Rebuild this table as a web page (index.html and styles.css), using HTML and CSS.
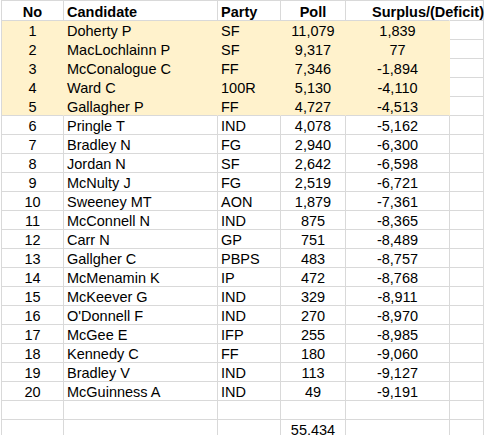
FILE: index.html
```html
<!DOCTYPE html>
<html>
<head>
<meta charset="utf-8">
<link rel="stylesheet" href="styles.css">
</head>
<body>
<div class="sheet">
  <div class="c h ctr">No</div><div class="c h lft">Candidate</div><div class="c h lft">Party</div><div class="c h ctr">Poll</div><div class="c h sur">Surplus/(Deficit)</div><div class="c h"></div>

  <div class="c hl ctr">1</div><div class="c hl lft">Doherty P</div><div class="c hl lft">SF</div><div class="c hl ctr">11,079</div><div class="c hl ctr">1,839</div><div class="c"></div>
  <div class="c hl ctr">2</div><div class="c hl lft">MacLochlainn P</div><div class="c hl lft">SF</div><div class="c hl ctr">9,317</div><div class="c hl ctr">77</div><div class="c"></div>
  <div class="c hl ctr">3</div><div class="c hl lft">McConalogue C</div><div class="c hl lft">FF</div><div class="c hl ctr">7,346</div><div class="c hl ctr">-1,894</div><div class="c"></div>
  <div class="c hl ctr">4</div><div class="c hl lft">Ward C</div><div class="c hl lft">100R</div><div class="c hl ctr">5,130</div><div class="c hl ctr">-4,110</div><div class="c"></div>
  <div class="c hl last ctr">5</div><div class="c hl last lft">Gallagher P</div><div class="c hl last lft">FF</div><div class="c hl last ctr">4,727</div><div class="c hl last ctr">-4,513</div><div class="c"></div>

  <div class="c ctr">6</div><div class="c lft">Pringle T</div><div class="c lft">IND</div><div class="c ctr">4,078</div><div class="c ctr">-5,162</div><div class="c"></div>
  <div class="c ctr">7</div><div class="c lft">Bradley N</div><div class="c lft">FG</div><div class="c ctr">2,940</div><div class="c ctr">-6,300</div><div class="c"></div>
  <div class="c ctr">8</div><div class="c lft">Jordan N</div><div class="c lft">SF</div><div class="c ctr">2,642</div><div class="c ctr">-6,598</div><div class="c"></div>
  <div class="c ctr">9</div><div class="c lft">McNulty J</div><div class="c lft">FG</div><div class="c ctr">2,519</div><div class="c ctr">-6,721</div><div class="c"></div>
  <div class="c ctr">10</div><div class="c lft">Sweeney MT</div><div class="c lft">AON</div><div class="c ctr">1,879</div><div class="c ctr">-7,361</div><div class="c"></div>
  <div class="c ctr">11</div><div class="c lft">McConnell N</div><div class="c lft">IND</div><div class="c ctr">875</div><div class="c ctr">-8,365</div><div class="c"></div>
  <div class="c ctr">12</div><div class="c lft">Carr N</div><div class="c lft">GP</div><div class="c ctr">751</div><div class="c ctr">-8,489</div><div class="c"></div>
  <div class="c ctr">13</div><div class="c lft">Gallgher C</div><div class="c lft">PBPS</div><div class="c ctr">483</div><div class="c ctr">-8,757</div><div class="c"></div>
  <div class="c ctr">14</div><div class="c lft">McMenamin K</div><div class="c lft">IP</div><div class="c ctr">472</div><div class="c ctr">-8,768</div><div class="c"></div>
  <div class="c ctr">15</div><div class="c lft">McKeever G</div><div class="c lft">IND</div><div class="c ctr">329</div><div class="c ctr">-8,911</div><div class="c"></div>
  <div class="c ctr">16</div><div class="c lft">O'Donnell F</div><div class="c lft">IND</div><div class="c ctr">270</div><div class="c ctr">-8,970</div><div class="c"></div>
  <div class="c ctr">17</div><div class="c lft">McGee E</div><div class="c lft">IFP</div><div class="c ctr">255</div><div class="c ctr">-8,985</div><div class="c"></div>
  <div class="c ctr">18</div><div class="c lft">Kennedy C</div><div class="c lft">FF</div><div class="c ctr">180</div><div class="c ctr">-9,060</div><div class="c"></div>
  <div class="c ctr">19</div><div class="c lft">Bradley V</div><div class="c lft">IND</div><div class="c ctr">113</div><div class="c ctr">-9,127</div><div class="c"></div>
  <div class="c ctr">20</div><div class="c lft">McGuinness A</div><div class="c lft">IND</div><div class="c ctr">49</div><div class="c ctr">-9,191</div><div class="c"></div>

  <div class="c"></div><div class="c"></div><div class="c"></div><div class="c"></div><div class="c"></div><div class="c"></div>
  <div class="c"></div><div class="c"></div><div class="c"></div><div class="c ctr">55,434</div><div class="c"></div><div class="c"></div>
</div>
</body>
</html>
```
FILE: styles.css
```css
html, body {
  margin: 0;
  padding: 0;
  background: #fff;
  overflow: hidden;
  width: 484px;
  height: 435px;
}

.sheet {
  margin-left: 1px;
  border-left: 1px solid #d9d9d9;
  border-top: 1px solid #d9d9d9;
  display: grid;
  grid-template-columns: 62px 154px 63px 65px 104px 34px;
  grid-template-rows: 20px;
  grid-auto-rows: 19px;
  font-family: "Liberation Sans", Arial, sans-serif;
  font-size: 14.5px;
  color: #000;
}

.c {
  box-sizing: border-box;
  border-right: 1px solid #d9d9d9;
  border-bottom: 1px solid #d9d9d9;
  display: flex;
  align-items: flex-end;
  line-height: 16px;
  white-space: nowrap;
  overflow: visible;
  min-width: 0;
}

.h {
  font-weight: bold;
}

.ctr { justify-content: center; }
.lft { justify-content: flex-start; padding-left: 3px; }

.sur {
  justify-content: flex-start;
  padding-left: 26px;
  border-right-color: transparent;
  position: relative;
  z-index: 1;
}

.hl {
  background: #fff2cc;
  border-right-color: #fff2cc;
  border-bottom-color: #fff2cc;
}

.hl.last {
  border-bottom-color: #d9d9d9;
}
```
